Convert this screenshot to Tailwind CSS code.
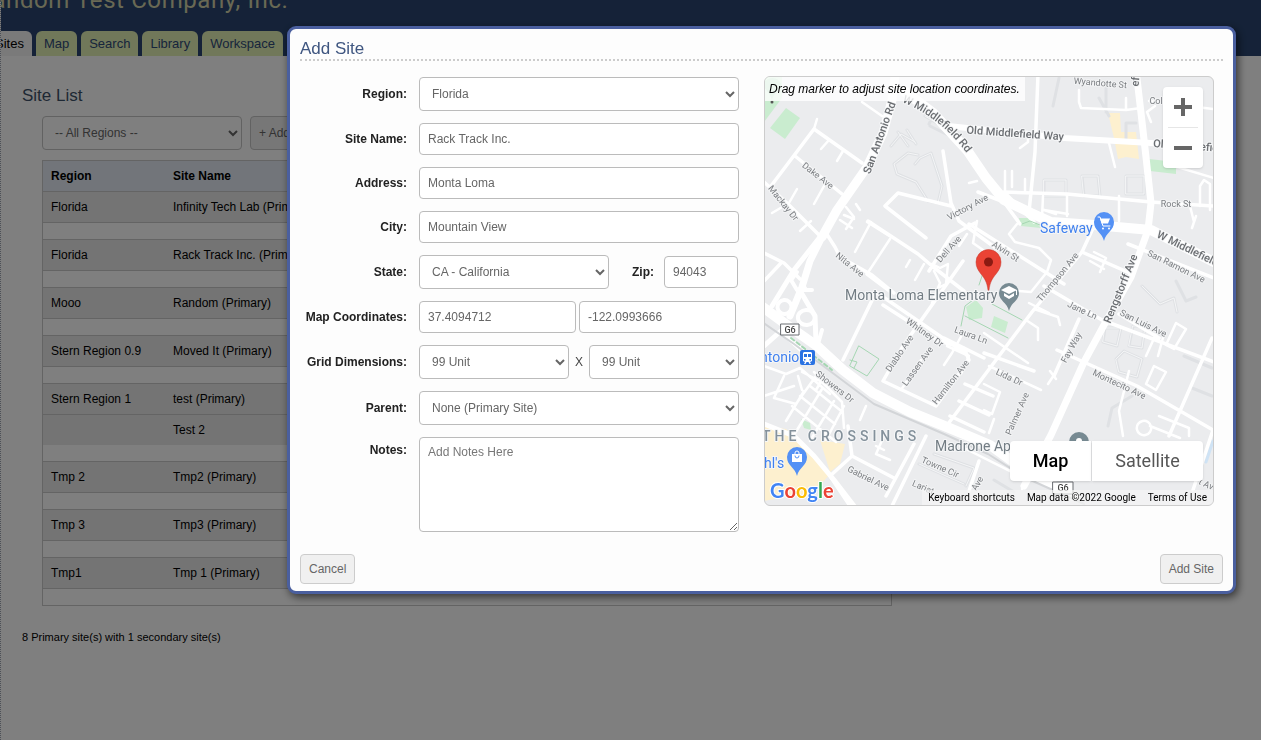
<!DOCTYPE html>
<html lang="en">
<head>
    <meta charset="UTF-8">
    <meta name="viewport" content="width=device-width, initial-scale=1.0">
    <title>Add Site</title>
    <script src="https://cdn.jsdelivr.net/npm/@tailwindcss/browser@4"></script>
</head>
<body class="bg-white font-['Liberation_Sans',Arial,sans-serif] text-xs text-black">
    <div class="h-screen overflow-hidden border-l border-dotted border-gray-400">
        <header class="flex h-[56px] flex-col justify-between overflow-hidden bg-[#2a4570]">
            <div class="-mt-4 -ml-6 font-[Roboto,sans-serif] text-2xl tracking-wide whitespace-nowrap text-[#d2d2a8]">Random Test Company, Inc.</div>
            <nav class="-ml-3.5 flex gap-1 text-[13px] leading-[25px] text-[#2f4a78]">
                <a href="#" class="rounded-t-md bg-[#f4f4f4] px-2 text-black">Sites</a>
                <a href="#" class="rounded-t-md bg-[#e2f0b4] px-2">Map</a>
                <a href="#" class="rounded-t-md bg-[#e2f0b4] px-2">Search</a>
                <a href="#" class="rounded-t-md bg-[#e2f0b4] px-2">Library</a>
                <a href="#" class="rounded-t-md bg-[#e2f0b4] px-2">Workspace</a>
            </nav>
        </header>

        <main class="px-[21px] pt-[30px]">
            <h2 class="text-[17px] leading-5 text-[#3d5168]">Site List</h2>
            <div class="mt-2.5 ml-5 flex gap-2">
                <select aria-label="Region filter" class="h-[34px] w-[200px] rounded border border-[#c4c4c4] bg-white px-2 text-[#666]">
                    <option>-- All Regions --</option>
                </select>
                <button class="h-[34px] rounded border border-[#c4c4c4] bg-[#eee] px-2 text-[#666]">+ Add Site</button>
            </div>

            <table class="mt-2.5 ml-5 w-[850px] border-separate border-spacing-0 border border-t-0 border-[#c8c8c8] text-left [&_td]:px-2 [&_td]:py-0 [&_th]:px-2 [&_th]:py-0">
                <thead>
                    <tr class="h-[31px] bg-[#e4ebf4] [&>th]:border-t [&>th]:border-[#c8c8c8]"><th class="w-[122px]">Region</th><th>Site Name</th></tr>
                </thead>
                <tbody class="[&_td]:border-[#c8c8c8]">
                    <tr class="h-[31px] bg-[#e8e8e8] [&>td]:border-t"><td>Florida</td><td>Infinity Tech Lab (Primary)</td></tr>
                    <tr class="h-[17px] [&>td]:border-t"><td colspan="2"></td></tr>
                    <tr class="h-[31px] bg-[#e8e8e8] [&>td]:border-t"><td>Florida</td><td>Rack Track Inc. (Primary)</td></tr>
                    <tr class="h-[17px] [&>td]:border-t"><td colspan="2"></td></tr>
                    <tr class="h-[31px] bg-[#e8e8e8] [&>td]:border-t"><td>Mooo</td><td>Random (Primary)</td></tr>
                    <tr class="h-[17px] [&>td]:border-t"><td colspan="2"></td></tr>
                    <tr class="h-[31px] bg-[#e8e8e8] [&>td]:border-t"><td>Stern Region 0.9</td><td>Moved It (Primary)</td></tr>
                    <tr class="h-[17px] [&>td]:border-t"><td colspan="2"></td></tr>
                    <tr class="h-[31px] bg-[#e8e8e8] [&>td]:border-t"><td>Stern Region 1</td><td>test (Primary)</td></tr>
                    <tr class="h-[31px] bg-[#e8e8e8] [&>td]:border-t"><td></td><td>Test 2</td></tr>
                    <tr class="h-4"><td colspan="2"></td></tr>
                    <tr class="h-[31px] bg-[#e8e8e8] [&>td]:border-t"><td>Tmp 2</td><td>Tmp2 (Primary)</td></tr>
                    <tr class="h-[17px] [&>td]:border-t"><td colspan="2"></td></tr>
                    <tr class="h-[31px] bg-[#e8e8e8] [&>td]:border-t"><td>Tmp 3</td><td>Tmp3 (Primary)</td></tr>
                    <tr class="h-[17px] [&>td]:border-t"><td colspan="2"></td></tr>
                    <tr class="h-[31px] bg-[#e8e8e8] [&>td]:border-t"><td>Tmp1</td><td>Tmp 1 (Primary)</td></tr>
                    <tr class="h-[17px] [&>td]:border-t"><td colspan="2"></td></tr>
                </tbody>
            </table>
            <p class="mt-[23px] text-[11px] leading-4">8 Primary site(s) with 1 secondary site(s)</p>
        </main>
    </div>

    <!-- Add site dialog -->
    <div class="fixed inset-0 bg-black/50">
        <form class="absolute top-[26px] right-[25px] left-[287px] rounded-[9px] border-[3px] border-[#4a5f9f] bg-[#fdfdfd] px-2.5 pb-[7px] shadow-[2px_3px_8px_rgba(0,0,0,0.6)]">
            <h2 class="border-b-2 border-dotted border-[#ccc] pt-2.5 text-[17px] leading-5 text-[#3f5680]">Add Site</h2>

            <div class="flex pt-[15px]">
                <div class="grid w-[439px] shrink-0 grid-cols-[107px_1fr] items-center gap-3 pt-px text-[#666] [&_input]:h-8 [&_input]:rounded [&_input]:border [&_input]:border-[#bbb] [&_input]:bg-white [&_input]:px-2 [&_select]:h-[34px] [&_select]:rounded [&_select]:border [&_select]:border-[#bbb] [&_select]:bg-white [&_select]:px-2 [&_label]:text-right [&_label]:font-bold [&_label]:whitespace-nowrap [&_label]:text-[#222]">
                    <label for="region">Region:</label>
                    <select id="region"><option>Florida</option></select>
                    <label for="name">Site Name:</label>
                    <input id="name" type="text" value="Rack Track Inc.">
                    <label for="address">Address:</label>
                    <input id="address" type="text" value="Monta Loma">
                    <label for="city">City:</label>
                    <input id="city" type="text" value="Mountain View">
                    <label for="state">State:</label>
                    <div class="flex items-center">
                        <select id="state" class="w-[190px]"><option>CA - California</option></select>
                        <label for="zip" class="flex-1 pr-2.5">Zip:</label>
                        <input id="zip" type="text" class="mr-px w-[74px]" value="94043">
                    </div>
                    <label for="lat">Map Coordinates:</label>
                    <div class="flex gap-[3px] pr-[3px]">
                        <input id="lat" type="text" class="w-0 flex-1" value="37.4094712">
                        <input type="text" aria-label="Longitude" class="w-0 flex-1" value="-122.0993666">
                    </div>
                    <label for="rows">Grid Dimensions:</label>
                    <div class="flex items-center justify-between text-[#444]">
                        <select id="rows" class="w-[150px] text-[#666]"><option>99 Unit</option></select>
                        X
                        <select aria-label="Grid columns" class="w-[150px] text-[#666]"><option>99 Unit</option></select>
                    </div>
                    <label for="parent">Parent:</label>
                    <select id="parent"><option>None (Primary Site)</option></select>
                    <label for="notes" class="self-start pt-[5px]">Notes:</label>
                    <textarea id="notes" placeholder="Add Notes Here" class="block h-[95px] rounded border border-[#bbb] bg-white px-2 py-1.5 placeholder:text-[#777]"></textarea>
                </div>

                <!-- Map -->
                <div class="relative mr-[9px] ml-[25px] h-[430px] flex-1 overflow-hidden rounded-md border border-[#ccc] bg-[#ebecee] font-[Roboto,sans-serif]">
                    <svg class="h-full w-full" viewBox="1 1 448 428" preserveAspectRatio="xMidYMid slice" fill="none" stroke-linecap="round" stroke-linejoin="round">
                        <!-- land use -->
                        <g fill="#c9eccf">
                            <path d="M0 0h18v22l-18 24z"/>
                            <path d="M22 32 36 42 21 63 6 52z"/>
                            <path d="M385 83 412 86V98L386 95z"/>
                            <path d="M255 142h13l9 10-20-2z"/>
                            <path d="M202 231l10-7 7 8-1 10-13 2z"/>
                            <path d="M230 240l14 6-3 11-14-6z"/>
                            <path d="M37 343l9 4 1 7-7-2z"/>
                        </g>
                        <g fill="#fdf0cf">
                            <path d="M344 37h12l1 19h15l3 27-13-2-8 2-4-21z"/>
                            <path d="M0 350 22 353 46 374 66 398 50 416 0 425z"/>
                            <path d="M56 364 81 368 76 388 66 396z"/>
                            <path d="M84 422l8 7h-8z"/>
                        </g>
                        <path stroke="#cfe3f5" stroke-width="3" d="M449 365 442 386"/>

                        <!-- parking aisles and footpaths -->
                        <g stroke="#dfe1e4" stroke-width="3">
                            <path d="M154 79 144 77 130 88 133 98 152 106 164 125 174 127 178 110 167 77 156 82 151 88M127 70l10-12 14 8M134 56l10 14M143 54l9 14M161 40l30 18M166 50l20 10M170 38l-5 10M280 104h22v16h-22zM318 100h16l2 20h-16zM362 100h18v18h-18zM342 12v24M372 47h-10v16M295 2l-6 28M345 40l-10-18M341 252h16l-4 18-14-4zM369 250h12l-3 22-13-2zM352 283l8-8 18 8-5 18-18-5zM378 210l18 18 14-6 3 14M412 205l10 20 10-4M420 280l28 12M428 312l20 8M155 388l45 20M170 378l40 14-8 18M230 404l20 12M368 320l-20 12-4 18"/>
                        </g>
                        <g stroke="#f4f5f6" stroke-width="1">
                            <path d="M154 79 144 77 130 88 133 98 152 106 164 125 174 127 178 110 167 77 156 82 151 88M127 70l10-12 14 8M134 56l10 14M143 54l9 14M161 40l30 18M280 104h22v16h-22zM318 100h16l2 20h-16zM362 100h18v18h-18zM341 252h16l-4 18-14-4zM369 250h12l-3 22-13-2zM352 283l8-8 18 8-5 18-18-5zM378 210l18 18 14-6 3 14M155 388l45 20M170 378l40 14-8 18"/>
                        </g>

                        <!-- side streets -->
                        <g stroke="#fff" stroke-width="2.500">
                            <path d="M50 53l3-10M65 64l-8 9M79 75l-6 10M33 113l-8 14-17 10M60 110l-10 18M47 145l-11 10"/>
                            <path d="M98 26 118 40M82 131l8 10-8 12M92 128l4 6M76 144l12 8M107 146l-16 30M126 163l-23 35M80 139l10 4"/>
                            <path d="M127 161 103 146M168 188l8 4 8-4-2 20-8 4M146 184l-4 7M160 188l-9 16M170 195l6 12-8 20"/>
                            <path d="M213 145l-4 22 20 14M203 158l-8 12M213 105l-8 2"/>
                            <path d="M241 95v20M248 95v16M261 103v12M256 72l8-6v-10h-8M279 120l-1 22M303 118v22M292 138l-12-4 24 4M355 120v25M345 67l6 24"/>
                            <path d="M315 14v12l2 6 45 2 15-2M362 34v-12M385 25l64 8M387 46l-4-10 8-6M410 90l40 12M436 130v-20l4-6 6 4v26M426 130l4 16M432 140l-4 12"/>
                            <path d="M253 148l-8 10 6 8 24 6 12 12-4 12-16 20-22-2M330 176l12 6-6 14M340 193l-14-8"/>
                            <path d="M285 237l-20-10M270 233l24 8 2 8M262 244l12 8v12M220 257l44 30M286 295l6 8M292 296l-8 12M225 290l52 24"/>
                            <path d="M220 308l16 8-8 22-8-4M365 295l-10 40 4 25M390 290l12 6-10 18-10-6zM374 348a7 7 0 1 0 12 8 7 7 0 1 0-12-8M386 350l30 12M395 340l30 12v8M412 247l10 6-12 20-8-4zM400 258l-6 22M382 280l10-22"/>
                            <path d="M0 290l22 8 14-6 30 26M0 320l30-10M20 300l-10 22 22 6 20-28M22 345l18-30M38 296l20 10 20 20 2 26M46 310l30 24M36 320l35 28M28 330l44 36M58 313l-28 46M70 325l-24 40M80 330l-18 34M50 296l8 8-6 10M34 300l4 14"/>
                            <path d="M102 330l-6 14M112 370l8 4M120 360l-8 18 14 6M199 257l-11 20-8 12M196 370l60 30M225 357l5-14M270 395l-12 18M245 385l15 18"/>
                            <path d="M137 314l20-30M183 270l22 10-8 18"/>
                        </g>
                        <g stroke="#fff" stroke-width="3.500">
                            <path d="M7 110 50 53 98 87M31 80 78 118M0 106 24 128 56 160M0 177l20 10 16 16M18 186 0 205"/>
                            <path d="M62 157l9 14 5 10 32 18 22 18M104 145 154 178 168 190 200 215M179 75l8 52 8 18 38 28M187 130 134 117 121 130 162 162M165 195 187 160 211 147M103 198l24 18"/>
                            <path d="M112 216 79 284M112 216l90 62M119 229 175 265 200 272 205 284 172 330 119 305 139 270 199 185M205 148 300 208M180 262l40 20"/>
                            <path d="M330 150l-12 26-50 60-84 112M220 277l50 18M201 308l28 12M195 325l30 14M186 340l34 16"/>
                            <path d="M274 -2l-3 78-6 60M240 116l63 2 84 8 63 4M214 116l26 10 16 22M240 116l30 30"/>
                            <path d="M318 176l50 22M315 243 290 300M280 210l58 34 112 42M293 274l80 36 76 44M448 262 405 360M449 354l-20 60M355 238l40 24M364 168l86 34"/>
                            <path d="M66 400 88 380 84 350M88 380l42 22M66 400l20 30M162 360 128 430M150 368 122 420M215 385l-10 30"/>
                        </g>

                        <!-- main roads -->
                        <g stroke="#fff">
                            <path stroke-width="6" d="M184 50 300 62 387 67 450 72"/>
                            <path stroke-width="7" d="M372-6 377 37 382 81 387 127 384 154 367 201 340 249 320 286 287 359 260 410"/>
                            <path stroke-width="9" d="M131 0 128 24 119 57 103 91 73 134 58 161"/>
                            <path stroke-width="7" d="M58 161 46 185 38 211 26 240"/>
                            <path stroke-width="5" d="M56 161 30 194 8 230M38 218l13 22 1 26"/>
                            <path stroke-width="10" d="M139 14 169 37 203 74 222 102 240 124 267 137 287 146 330 149 387 154 450 186"/>
                            <path stroke-width="10" d="M-4 229 23 249 53 270 79 294 109 317 146 336 183 351 226 369 263 396 310 420"/>
                            <path stroke-width="5" d="M0 348 30 360 50 380 70 404 90 430M0 270l18-16M20 258l24 22"/>
                            <path stroke-width="4" d="M20 224a7 7 0 1 0 1 14 7 7 0 1 0-1-14zM42 234a8 7 0 1 0 1 15 8 7 0 1 0-1-15zM33 196l-6 8 6 10 8-2M38 214h10M58 254l-4 14"/>
                        </g>
                        <path stroke="#d3d5d8" stroke-width="2" d="M-2 246 30 268 70 298 110 328 180 358 224 378 262 402 320 428"/>

                        <!-- park outlines -->
                        <g stroke="#a5d6b2">
                            <path d="M95 270 115 283 103 300 86 290zM86 284l7 2-3 6M197 250l4-20 8-6M201 240l43 22M228 228l30 16M219 197l-4 12M258 148l8-3 10 4"/>
                            <path stroke-width="2" stroke-dasharray="4 3" d="M27 262 68 294"/>
                        </g>

                        <!-- street names -->
                        <g fill="#7b7e82" stroke="#f3f4f5" stroke-width="2" paint-order="stroke" font-size="9" text-anchor="middle">
                            <text transform="translate(52 102) rotate(38)">Dake Ave</text>
                            <text transform="translate(17 129) rotate(51)">Mackay Dr</text>
                            <text transform="translate(84 191) rotate(39)">Nita Ave</text>
                            <text transform="translate(205 134) rotate(-28)">Victory Ave</text>
                            <text transform="translate(187 175) rotate(-48)">Dell Ave</text>
                            <text transform="translate(336 10) rotate(5)">Wyandotte St</text>
                            <text transform="translate(392 28)">Col</text>
                            <text transform="translate(412 131)">Rock St</text>
                            <text transform="translate(411 193) rotate(26)">San Ramon Ave</text>
                            <text transform="translate(240 178) rotate(32)">Alvin St</text>
                            <text transform="translate(296 203) rotate(-51)">Thompson Ave</text>
                            <text transform="translate(317 237) rotate(25)">Jane Ln</text>
                            <text transform="translate(378 250) rotate(26)">San Luis Ave</text>
                            <text transform="translate(310 273) rotate(-61)">Fay Way</text>
                            <text transform="translate(354 311) rotate(25)">Montecito Ave</text>
                            <text transform="translate(244 304) rotate(25)">Lida Dr</text>
                            <text transform="translate(256 339) rotate(-66)">Palmer Ave</text>
                            <text transform="translate(159 259) rotate(35)">Whitney Dr</text>
                            <text transform="translate(206 262) rotate(20)">Laura Ln</text>
                            <text transform="translate(138 279) rotate(-56)">Diablo Ave</text>
                            <text transform="translate(156 292) rotate(-54)">Lassen Ave</text>
                            <text transform="translate(189 308) rotate(-52)">Hamilton Ave</text>
                            <text transform="translate(69 313) rotate(38)">Showers Dr</text>
                            <text transform="translate(103 405) rotate(26)">Gabriel Ave</text>
                            <text transform="translate(175 394) rotate(24)">Towne Cir</text>
                            <text transform="translate(158 414) rotate(23)">Lariat</text>
                            <text transform="translate(216 409) rotate(-60)">Ave</text>
                            <text transform="translate(441 411) rotate(25)">t Av</text>
                        </g>
                        <path id="middlefield" d="M138 26C160 35 185 51 206 82"/>
                        <g fill="#6b6e72" stroke="#f6f7f8" stroke-width="2" paint-order="stroke" font-size="11" font-weight="500">
                            <text><textPath href="#middlefield">W Middlefield Rd</textPath></text>
                            <text text-anchor="middle" transform="translate(119 63) rotate(-70)">San Antonio Rd</text>
                            <text text-anchor="middle" transform="translate(251 61) rotate(4)">Old Middlefield Way</text>
                            <text transform="translate(389 71) rotate(4)">Old Middlefield Way</text>
                            <text transform="translate(392 161) rotate(26)">W Middlefield Rd</text>
                            <text text-anchor="middle" transform="translate(360 214) rotate(-68)">Rengstorff Ave</text>
                            <text text-anchor="middle" transform="translate(375 6) rotate(-85)">ef</text>
                        </g>

                        <!-- route shields -->
                        <g fill="#fff" stroke="#6b6e72">
                            <path d="M17 248h18v11H17zM289 406h20v12h-20z"/>
                        </g>
                        <g fill="#444" font-size="9" font-weight="500" text-anchor="middle">
                            <text x="26" y="257">G6</text>
                            <text x="299" y="415">G6</text>
                        </g>

                        <!-- places -->
                        <g stroke="#f6f7f8" stroke-width="2" paint-order="stroke" font-size="14">
                            <text x="276" y="157" fill="#4080ee">Safeway</text>
                            <text x="-4" y="286" fill="#4080ee">ntonio</text>
                            <text x="0" y="392" fill="#4080ee">hl's</text>
                            <text x="81" y="224" fill="#727c83">Monta Loma Elementary</text>
                            <text x="171" y="375" fill="#727c83">Madrone Ap</text>
                            <text x="-2" y="365" fill="#84919b" font-weight="500" letter-spacing="4">THE CROSSINGS</text>
                        </g>
                        <g fill="#5491f5">
                            <path d="M340 165c-2-9-10-10-10-19a10 10 0 0 1 20 0c0 9-8 10-10 19z"/>
                            <path d="M33 400c-2-9-10-10-10-19a10 10 0 0 1 20 0c0 9-8 10-10 19z"/>
                        </g>
                        <path stroke="#fff" d="M334 141h2l3 9h7"/>
                        <path fill="#fff" d="M336 142.500h10l-2 5h-6.500z"/>
                        <circle cx="339" cy="152.500" r="1" fill="#fff"/><circle cx="345" cy="152.500" r="1" fill="#fff"/>
                        <path fill="#fff" d="M28 378h10v8H28z"/>
                        <path stroke="#fff" d="M31 378v-1a2 2 0 0 1 4 0v1"/>
                        <path stroke="#5491f5" d="M31 380a2 2 0 0 0 4 0"/>
                        <rect x="36" y="274" width="15" height="15" rx="2" fill="#2a72e2"/>
                        <path fill="#fff" d="M40 276h7l1 1v8l-2 1 1 2h-1.500l-1-2h-2l-1 2H40l1-2-2-1v-8z"/>
                        <path fill="#2a72e2" d="M40 278h3v3h-3zM44 278h3v3h-3zM40 283h1.500v1.500H40zM45.500 283H47v1.500h-1.500z"/>
                        <path fill="#778a92" d="M245 235c-2-9-10-10-10-18a10 10 0 0 1 20 0c0 8-8 9-10 18zM305 366a10 10 0 1 1 20 0z"/>
                        <path fill="#fff" d="M245 210l8 4-8 4-8-4zM240 217l5 3 5-3v3l-5 3-5-3zM252 214h1v5h-1z"/>
                        <circle cx="315" cy="365" r="3" fill="#fff"/>
                        <!-- faded pin under the hint -->
                        <path fill="#9fd8ae" d="M8 25C7 16 0 15 0 8a9 9 0 0 1 17 0c0 7-8 8-9 17z"/>
                        <circle cx="8" cy="26" r="1.500" fill="#555"/>

                        <!-- draggable marker -->
                        <path fill="#ea4335" stroke="#c5392c" stroke-width=".5" d="M224 214c-1-8-3-11-7-16-3-4-5-7-5-12a12.500 12.500 0 0 1 25 0c0 5-2 8-5 12-4 5-6 8-7 16z"/>
                        <circle cx="224.500" cy="186" r="4.500" fill="#8b1a12"/>

                        <text x="6" y="422" font-family="Lato, sans-serif" font-size="20" font-weight="700" stroke="#fff" stroke-width="2" paint-order="stroke"><tspan fill="#4285f4">G</tspan><tspan fill="#ea4335">o</tspan><tspan fill="#fbbc05">o</tspan><tspan fill="#4285f4">g</tspan><tspan fill="#34a853">l</tspan><tspan fill="#ea4335">e</tspan></text>
                    </svg>

                    <p class="absolute top-0 left-0 bg-white/80 px-1 pr-[5px] font-['Liberation_Sans',Arial,sans-serif] text-xs leading-6 text-black italic">Drag marker to adjust site location coordinates.</p>

                    <div class="absolute top-2.5 right-2.5 w-10 rounded-sm bg-white shadow">
                        <button type="button" aria-label="Zoom in" class="flex h-10 w-full items-center justify-center">
                            <svg class="h-[18px] w-[18px]" viewBox="0 0 18 18" fill="#666"><path d="M7 0h4v7h7v4h-7v7H7v-7H0V7h7z"/></svg>
                        </button>
                        <div class="mx-[5px] h-px bg-[#e6e6e6]"></div>
                        <button type="button" aria-label="Zoom out" class="flex h-10 w-full items-center justify-center">
                            <svg class="h-[18px] w-[18px]" viewBox="0 0 18 18" fill="#666"><path d="M0 7h18v4H0z"/></svg>
                        </button>
                    </div>

                    <div class="absolute right-2.5 bottom-6 flex gap-px text-lg leading-10">
                        <button type="button" class="w-[81px] rounded-l-sm bg-white font-medium text-black shadow">Map</button>
                        <button type="button" class="w-[111px] rounded-r-sm bg-white text-[#565656] shadow">Satellite</button>
                    </div>

                    <div class="absolute right-0 bottom-0 flex bg-[#f5f5f5]/70 text-[10px] leading-[15px] text-black">
                        <button type="button" class="px-1.5">Keyboard shortcuts</button>
                        <span class="px-1.5">Map data ©2022 Google</span>
                        <a href="#" class="px-1.5">Terms of Use</a>
                    </div>
                </div>
            </div>

            <div class="mt-[22px] flex justify-between text-[#666]">
                <button type="button" class="h-[30px] rounded border border-[#ccc] bg-[#f0f0f0] px-2">Cancel</button>
                <button class="h-[30px] rounded border border-[#ccc] bg-[#f0f0f0] px-2">Add Site</button>
            </div>
        </form>
    </div>
</body>
</html>
